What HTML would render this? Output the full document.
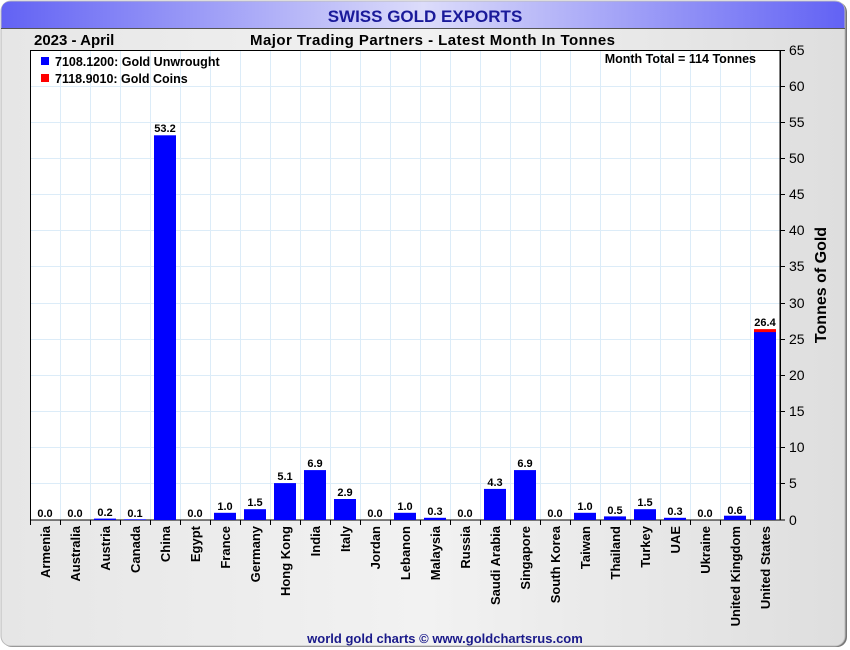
<!DOCTYPE html>
<html><head><meta charset="utf-8"><style>
html,body{margin:0;padding:0;background:#fff;}
svg{display:block;font-family:"Liberation Sans",Arial,sans-serif;}
</style></head><body>
<svg width="850" height="650" viewBox="0 0 850 650" xmlns="http://www.w3.org/2000/svg">
<defs>
<linearGradient id="hd" x1="0" x2="1" y1="0" y2="0">
<stop offset="0" stop-color="#6262f4"/><stop offset="0.5" stop-color="#dcdcfa"/><stop offset="1" stop-color="#6262f4"/>
</linearGradient>
<linearGradient id="bg" x1="0" x2="1" y1="0" y2="0">
<stop offset="0" stop-color="#e6e6e6"/><stop offset="0.5" stop-color="#f2f2f2"/><stop offset="1" stop-color="#dedede"/>
</linearGradient>
</defs>
<rect x="0" y="0" width="850" height="650" fill="#fff"/>
<rect x="2" y="2" width="845" height="645" rx="10" fill="#777"/>
<rect x="1" y="1" width="844" height="645" rx="10" fill="url(#bg)" stroke="#bbb" stroke-width="1"/>
<path d="M1.5 28 V11 Q1.5 1.5 11 1.5 H834 Q844.5 1.5 844.5 11 V28 Z" fill="url(#hd)"/>
<line x1="1" y1="28.5" x2="845" y2="28.5" stroke="#555" stroke-width="1"/>
<text x="425" y="22" text-anchor="middle" font-size="17" font-weight="bold" fill="#1a1a9a">SWISS GOLD EXPORTS</text>
<text x="34" y="45" font-size="15" font-weight="bold" fill="#000">2023 - April</text>
<text x="250" y="45" font-size="15" font-weight="bold" fill="#000" textLength="365">Major Trading Partners - Latest Month In Tonnes</text>
<rect x="30.5" y="50.5" width="749.5" height="469.5" fill="#fff" stroke="#000" stroke-width="1"/>
<g stroke="#dcecf8" stroke-width="1">
<line x1="60.5" y1="51" x2="60.5" y2="520"/><line x1="90.5" y1="51" x2="90.5" y2="520"/><line x1="120.5" y1="51" x2="120.5" y2="520"/><line x1="150.5" y1="51" x2="150.5" y2="520"/><line x1="180.5" y1="51" x2="180.5" y2="520"/><line x1="210.5" y1="51" x2="210.5" y2="520"/><line x1="240.5" y1="51" x2="240.5" y2="520"/><line x1="270.5" y1="51" x2="270.5" y2="520"/><line x1="300.5" y1="51" x2="300.5" y2="520"/><line x1="330.5" y1="51" x2="330.5" y2="520"/><line x1="360.5" y1="51" x2="360.5" y2="520"/><line x1="390.5" y1="51" x2="390.5" y2="520"/><line x1="420.5" y1="51" x2="420.5" y2="520"/><line x1="450.5" y1="51" x2="450.5" y2="520"/><line x1="480.5" y1="51" x2="480.5" y2="520"/><line x1="510.5" y1="51" x2="510.5" y2="520"/><line x1="540.5" y1="51" x2="540.5" y2="520"/><line x1="570.5" y1="51" x2="570.5" y2="520"/><line x1="600.5" y1="51" x2="600.5" y2="520"/><line x1="630.5" y1="51" x2="630.5" y2="520"/><line x1="660.5" y1="51" x2="660.5" y2="520"/><line x1="690.5" y1="51" x2="690.5" y2="520"/><line x1="720.5" y1="51" x2="720.5" y2="520"/><line x1="750.5" y1="51" x2="750.5" y2="520"/>
<line x1="31" y1="86.5" x2="780" y2="86.5"/><line x1="31" y1="122.5" x2="780" y2="122.5"/><line x1="31" y1="158.5" x2="780" y2="158.5"/><line x1="31" y1="194.5" x2="780" y2="194.5"/><line x1="31" y1="230.5" x2="780" y2="230.5"/><line x1="31" y1="266.5" x2="780" y2="266.5"/><line x1="31" y1="303.5" x2="780" y2="303.5"/><line x1="31" y1="339.5" x2="780" y2="339.5"/><line x1="31" y1="375.5" x2="780" y2="375.5"/><line x1="31" y1="411.5" x2="780" y2="411.5"/><line x1="31" y1="447.5" x2="780" y2="447.5"/><line x1="31" y1="483.5" x2="780" y2="483.5"/>
</g>
<rect x="30.5" y="50.5" width="749.5" height="469.5" fill="none" stroke="#000" stroke-width="1"/>
<!-- legend -->
<rect x="41" y="57" width="8" height="8" fill="#0000ff"/>
<text x="55" y="66" font-size="12.5" font-weight="bold">7108.1200: Gold Unwrought</text>
<rect x="41" y="74" width="8" height="8" fill="#ff0000"/>
<text x="55" y="83" font-size="12.5" font-weight="bold">7118.9010: Gold Coins</text>
<text x="756" y="63" text-anchor="end" font-size="12.5" font-weight="bold">Month Total = 114 Tonnes</text>
<!-- bars -->
<g fill="#0000ff">
<rect x="94" y="518.6" width="22" height="1.4"/>
<rect x="124" y="519.3" width="22" height="0.7"/>
<rect x="154" y="135.3" width="22" height="384.7"/>
<rect x="214" y="512.8" width="22" height="7.2"/>
<rect x="244" y="509.2" width="22" height="10.8"/>
<rect x="274" y="483.1" width="22" height="36.9"/>
<rect x="304" y="470.1" width="22" height="49.9"/>
<rect x="334" y="499.0" width="22" height="21.0"/>
<rect x="394" y="512.8" width="22" height="7.2"/>
<rect x="424" y="517.8" width="22" height="2.2"/>
<rect x="484" y="488.9" width="22" height="31.1"/>
<rect x="514" y="470.1" width="22" height="49.9"/>
<rect x="574" y="512.8" width="22" height="7.2"/>
<rect x="604" y="516.4" width="22" height="3.6"/>
<rect x="634" y="509.2" width="22" height="10.8"/>
<rect x="664" y="517.8" width="22" height="2.2"/>
<rect x="724" y="515.7" width="22" height="4.3"/>
<rect x="754" y="332" width="22" height="188"/>
</g>
<rect x="754" y="329.1" width="22" height="3" fill="#ff0000"/>
<!-- value labels -->
<g font-size="11" font-weight="bold" text-anchor="middle" fill="#000">
<text x="45" y="517">0.0</text><text x="75" y="517">0.0</text><text x="105" y="516">0.2</text><text x="135" y="517">0.1</text>
<text x="165" y="132">53.2</text><text x="195" y="517">0.0</text><text x="225" y="510">1.0</text><text x="255" y="506">1.5</text>
<text x="285" y="480">5.1</text><text x="315" y="467">6.9</text><text x="345" y="496">2.9</text><text x="375" y="517">0.0</text>
<text x="405" y="510">1.0</text><text x="435" y="515">0.3</text><text x="465" y="517">0.0</text><text x="495" y="486">4.3</text>
<text x="525" y="467">6.9</text><text x="555" y="517">0.0</text><text x="585" y="510">1.0</text><text x="615" y="514">0.5</text>
<text x="645" y="506">1.5</text><text x="675" y="515">0.3</text><text x="705" y="517">0.0</text><text x="735" y="514">0.6</text>
<text x="765" y="326">26.4</text>
</g>
<!-- x ticks -->
<g stroke="#000" stroke-width="1">
<line x1="30.5" y1="520" x2="30.5" y2="525"/><line x1="60.5" y1="520" x2="60.5" y2="525"/><line x1="90.5" y1="520" x2="90.5" y2="525"/><line x1="120.5" y1="520" x2="120.5" y2="525"/><line x1="150.5" y1="520" x2="150.5" y2="525"/><line x1="180.5" y1="520" x2="180.5" y2="525"/><line x1="210.5" y1="520" x2="210.5" y2="525"/><line x1="240.5" y1="520" x2="240.5" y2="525"/><line x1="270.5" y1="520" x2="270.5" y2="525"/><line x1="300.5" y1="520" x2="300.5" y2="525"/><line x1="330.5" y1="520" x2="330.5" y2="525"/><line x1="360.5" y1="520" x2="360.5" y2="525"/><line x1="390.5" y1="520" x2="390.5" y2="525"/><line x1="420.5" y1="520" x2="420.5" y2="525"/><line x1="450.5" y1="520" x2="450.5" y2="525"/><line x1="480.5" y1="520" x2="480.5" y2="525"/><line x1="510.5" y1="520" x2="510.5" y2="525"/><line x1="540.5" y1="520" x2="540.5" y2="525"/><line x1="570.5" y1="520" x2="570.5" y2="525"/><line x1="600.5" y1="520" x2="600.5" y2="525"/><line x1="630.5" y1="520" x2="630.5" y2="525"/><line x1="660.5" y1="520" x2="660.5" y2="525"/><line x1="690.5" y1="520" x2="690.5" y2="525"/><line x1="720.5" y1="520" x2="720.5" y2="525"/><line x1="750.5" y1="520" x2="750.5" y2="525"/>
</g>
<!-- category labels -->
<g font-size="13" font-weight="bold" text-anchor="end" fill="#000">
<text transform="translate(50,526) rotate(-90)">Armenia</text>
<text transform="translate(80,526) rotate(-90)">Australia</text>
<text transform="translate(110,526) rotate(-90)">Austria</text>
<text transform="translate(140,526) rotate(-90)">Canada</text>
<text transform="translate(170,526) rotate(-90)">China</text>
<text transform="translate(200,526) rotate(-90)">Egypt</text>
<text transform="translate(230,526) rotate(-90)">France</text>
<text transform="translate(260,526) rotate(-90)">Germany</text>
<text transform="translate(290,526) rotate(-90)">Hong Kong</text>
<text transform="translate(320,526) rotate(-90)">India</text>
<text transform="translate(350,526) rotate(-90)">Italy</text>
<text transform="translate(380,526) rotate(-90)">Jordan</text>
<text transform="translate(410,526) rotate(-90)">Lebanon</text>
<text transform="translate(440,526) rotate(-90)">Malaysia</text>
<text transform="translate(470,526) rotate(-90)">Russia</text>
<text transform="translate(500,526) rotate(-90)">Saudi Arabia</text>
<text transform="translate(530,526) rotate(-90)">Singapore</text>
<text transform="translate(560,526) rotate(-90)">South Korea</text>
<text transform="translate(590,526) rotate(-90)">Taiwan</text>
<text transform="translate(620,526) rotate(-90)">Thailand</text>
<text transform="translate(650,526) rotate(-90)">Turkey</text>
<text transform="translate(680,526) rotate(-90)">UAE</text>
<text transform="translate(710,526) rotate(-90)">Ukraine</text>
<text transform="translate(740,526) rotate(-90)">United Kingdom</text>
<text transform="translate(770,526) rotate(-90)">United States</text>
</g>
<!-- y axis -->
<g stroke="#000" stroke-width="1">
<line x1="780.5" y1="50" x2="780.5" y2="520.5"/>
<line x1="780" y1="50.5" x2="785" y2="50.5"/><line x1="780" y1="86.5" x2="785" y2="86.5"/><line x1="780" y1="122.5" x2="785" y2="122.5"/><line x1="780" y1="158.5" x2="785" y2="158.5"/><line x1="780" y1="194.5" x2="785" y2="194.5"/><line x1="780" y1="230.5" x2="785" y2="230.5"/><line x1="780" y1="266.5" x2="785" y2="266.5"/><line x1="780" y1="303.5" x2="785" y2="303.5"/><line x1="780" y1="339.5" x2="785" y2="339.5"/><line x1="780" y1="375.5" x2="785" y2="375.5"/><line x1="780" y1="411.5" x2="785" y2="411.5"/><line x1="780" y1="447.5" x2="785" y2="447.5"/><line x1="780" y1="483.5" x2="785" y2="483.5"/><line x1="780" y1="520" x2="785" y2="520"/>
</g>
<g font-size="14" fill="#000">
<text x="789" y="55">65</text><text x="789" y="91">60</text><text x="789" y="127">55</text><text x="789" y="163">50</text><text x="789" y="199">45</text><text x="789" y="235">40</text><text x="789" y="271">35</text><text x="789" y="308">30</text><text x="789" y="344">25</text><text x="789" y="380">20</text><text x="789" y="416">15</text><text x="789" y="452">10</text><text x="789" y="488">5</text><text x="789" y="525">0</text>
</g>
<text transform="translate(826,285) rotate(-90)" text-anchor="middle" font-size="16" font-weight="bold">Tonnes of Gold</text>
<text x="445" y="643" text-anchor="middle" font-size="13" font-weight="bold" fill="#1a1a8a">world gold charts © www.goldchartsrus.com</text>
</svg>
</body></html>
